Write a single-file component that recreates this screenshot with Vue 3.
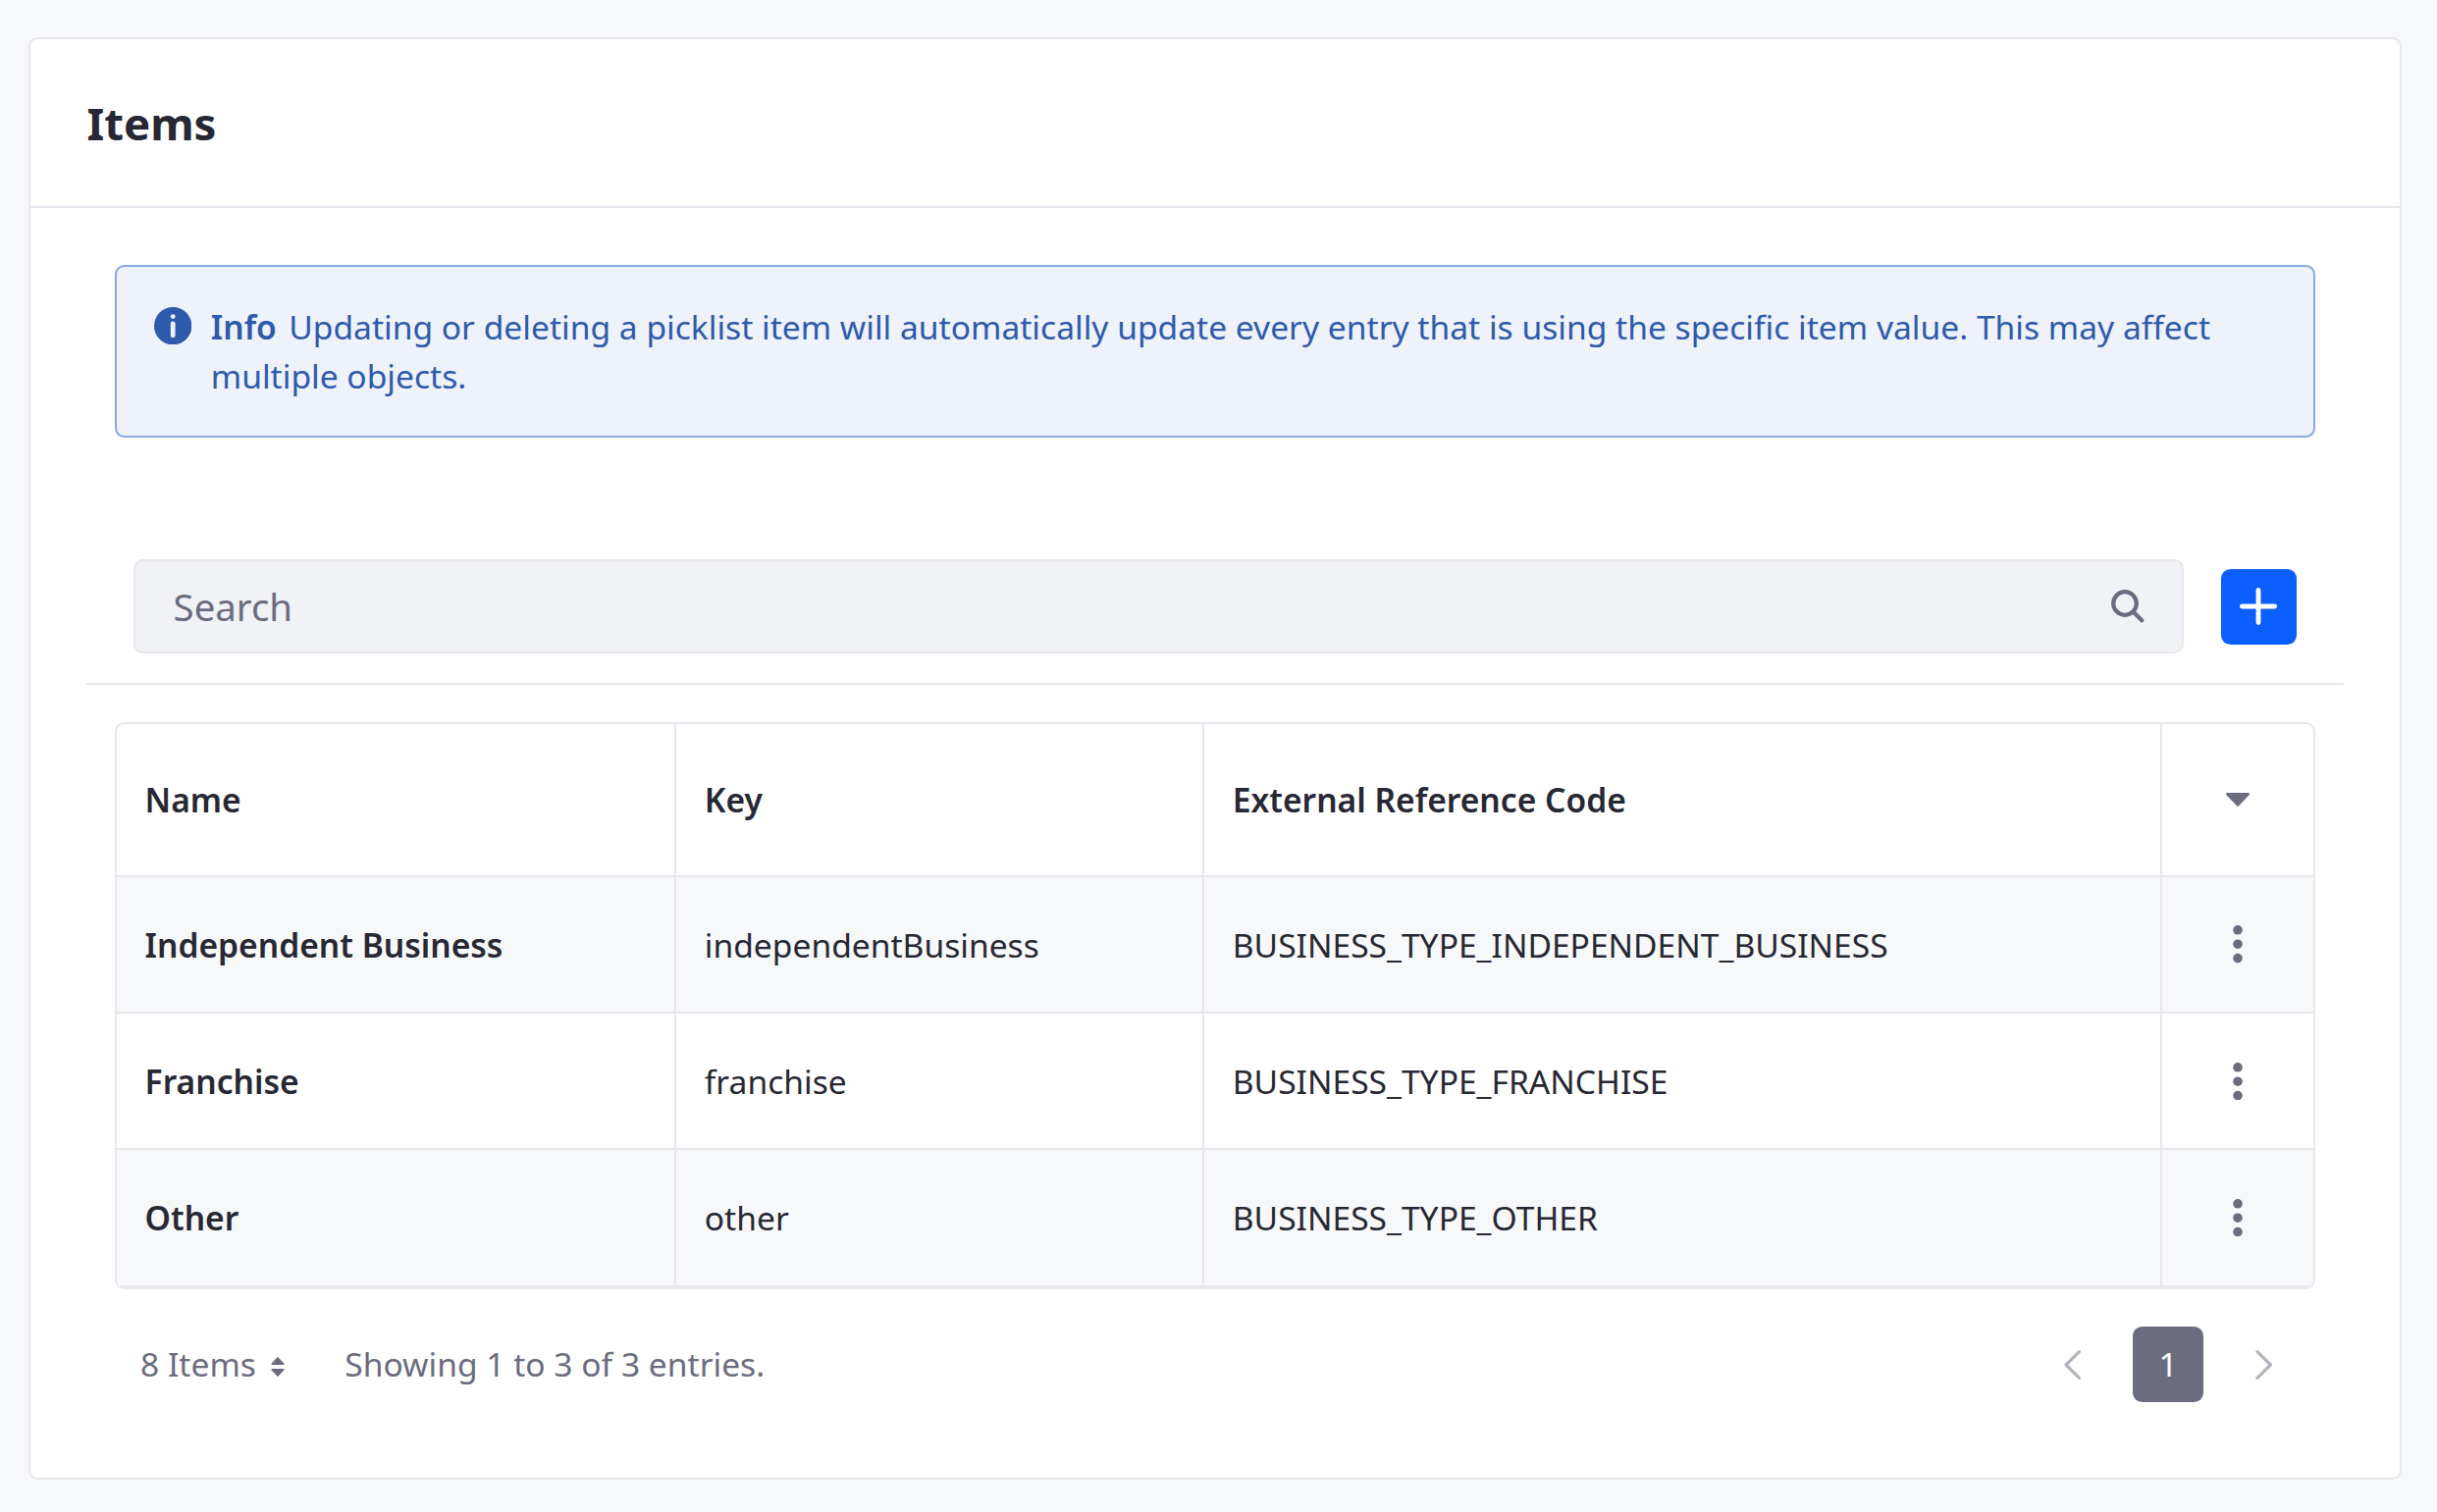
<script setup>
const rows = [
  { name: 'Independent Business', key: 'independentBusiness', code: 'BUSINESS_TYPE_INDEPENDENT_BUSINESS' },
  { name: 'Franchise', key: 'franchise', code: 'BUSINESS_TYPE_FRANCHISE' },
  { name: 'Other', key: 'other', code: 'BUSINESS_TYPE_OTHER' },
]
</script>

<template>
  <main class="page">
    <section class="card">
      <header class="card-header">
        <h1>Items</h1>
      </header>

      <div class="alert">
        <svg class="info-icon" viewBox="0 0 16 16">
          <circle cx="8" cy="8" r="8" fill="#2e5aac" />
          <circle cx="8" cy="4" r="1" fill="#eef2fa" />
          <rect x="7" y="6" width="2" height="7" rx="1" fill="#eef2fa" />
        </svg>
        <p><strong>Info</strong>Updating or deleting a picklist item will automatically update every entry that is using the specific item value. This may affect multiple objects.</p>
      </div>

      <div class="toolbar">
        <div class="search">
          <input type="text" placeholder="Search" aria-label="Search" />
          <svg class="search-icon" viewBox="0 0 34 34" fill="none" stroke="#6b6c7e">
            <circle cx="14" cy="14" r="11.8" stroke-width="4.2" />
            <path d="M23.5 23.5 31.2 31.2" stroke-width="4.2" stroke-linecap="round" />
          </svg>
        </div>
        <button class="add" aria-label="Add">
          <svg viewBox="0 0 38 38" stroke="#fff" stroke-width="4.8" stroke-linecap="round">
            <path d="M19 2.4v33.2M2.4 19h33.2" />
          </svg>
        </button>
      </div>

      <div class="table">
        <div class="row head">
          <div>Name</div>
          <div>Key</div>
          <div>External Reference Code</div>
          <div class="action">
            <svg class="caret" viewBox="0 0 24 14">
              <path d="M1.2 0H22.8C23.9 0 24.4 1.4 23.6 2.2L12.8 13.6C12.4 14.1 11.6 14.1 11.2 13.6L.4 2.2C-.4 1.4.1 0 1.2 0Z" fill="#6b6c7e" />
            </svg>
          </div>
        </div>
        <div v-for="row in rows" :key="row.key" class="row">
          <div class="name">{{ row.name }}</div>
          <div>{{ row.key }}</div>
          <div>{{ row.code }}</div>
          <div class="action">
            <svg class="dots" viewBox="0 0 10 38.4" fill="#6b6c7e">
              <circle cx="5" cy="4.8" r="4.8" />
              <circle cx="5" cy="19.2" r="4.8" />
              <circle cx="5" cy="33.6" r="4.8" />
            </svg>
          </div>
        </div>
      </div>

      <footer class="pagination">
        <span class="page-size">8 Items</span>
        <svg class="sort" viewBox="0 0 14 20" fill="#6b6c7e">
          <path d="M7.6.4 13.3 6.6C13.9 7.3 13.5 8 12.7 8H1.3C.5 8 .1 7.3.7 6.6L6.4.4C6.8 0 7.2 0 7.6.4Z" />
          <path d="M7.6 19.6 13.3 13.4C13.9 12.7 13.5 12 12.7 12H1.3C.5 12 .1 12.7.7 13.4L6.4 19.6C6.8 20 7.2 20 7.6 19.6Z" />
        </svg>
        <span class="showing">Showing 1 to 3 of 3 entries.</span>
        <nav class="pager">
          <svg class="chevron" viewBox="0 0 17 30"><path d="M15.5 1.6 2 15 15.5 28.4" /></svg>
          <span class="current">1</span>
          <svg class="chevron" viewBox="0 0 17 30"><path d="M1.9 1.6 15.4 15 1.9 28.4" /></svg>
        </nav>
      </footer>
    </section>
  </main>
</template>

<style>
body {
  margin: 0;
  background: #f7f8f9;
}
</style>

<style scoped>
* {
  box-sizing: border-box;
}
svg {
  display: block;
  flex: none;
}
.page {
  height: 1541px;
  padding: 38px 36px 33px 29px;
  background: #f7f8f9;
  font-family: "Noto Sans", sans-serif;
  font-size: 33.6px;
  line-height: 50.4px;
  color: #272833;
}
.card {
  height: 1470px;
  background: #fff;
  border: 2px solid #e7e7ed;
  border-radius: 9.6px;
}
.card-header {
  height: 172px;
  padding-left: 57.4px;
  border-bottom: 2px solid #e7e7ed;
  display: flex;
  align-items: center;
}
h1 {
  margin: 0;
  font-size: 45.6px;
  line-height: 56px;
  font-weight: 700;
}
.alert {
  height: 176px;
  margin: 58px 86px 0;
  padding: 36px 60px 0 38px;
  display: flex;
  gap: 19.4px;
  background: #eef2fa;
  border: 2px solid #89a7e0;
  border-radius: 9.6px;
  color: #2e5aac;
}
.alert p {
  margin: 0;
}
.alert strong {
  font-weight: 600;
  margin-right: 12.4px;
}
.info-icon {
  width: 38.4px;
  height: 38.4px;
  margin-top: 5px;
}
.toolbar {
  height: 252px;
  margin: 0 57px;
  padding: 0 48px 30px;
  display: flex;
  align-items: flex-end;
  gap: 38px;
  border-bottom: 2px solid #e7e7ed;
}
.search {
  flex: 1;
  height: 96px;
  padding: 0 38px 0 38.6px;
  display: flex;
  align-items: center;
  background: #f1f2f5;
  border: 2px solid #e7e7ed;
  border-radius: 9.6px;
}
.search input {
  flex: 1;
  padding: 0;
  border: 0;
  outline: 0;
  background: none;
  font: 38.4px/58px "Noto Sans", sans-serif;
}
.search input::placeholder {
  color: #6b6c7e;
  opacity: 1;
}
.search-icon {
  width: 34px;
  height: 34px;
}
.add {
  width: 77px;
  height: 77px;
  margin-bottom: 9px;
  padding: 0 1px 1px 0;
  display: grid;
  place-items: center;
  background: #0b5fff;
  border: 0;
  border-radius: 9.6px;
}
.add svg {
  width: 38px;
  height: 38px;
}
.table {
  margin: 38px 86px 0;
  border: 2px solid #e7e7ed;
  border-radius: 9.6px;
  overflow: hidden;
}
.row {
  height: 139px;
  display: grid;
  grid-template-columns: 570px 538px 976px 1fr;
  border-bottom: 2px solid #e7e7ed;
}
.row:nth-child(even) {
  background: #f7f8f9;
}
.row:last-child {
  height: 140px;
}
.row.head {
  height: 156px;
  font-weight: 600;
}
.row > div {
  display: flex;
  align-items: center;
  padding: 1px 0 0 28.8px;
  border-right: 2px solid #e7e7ed;
}
.row.head > div,
.row:last-child > div {
  padding-top: 0;
}
.row > .action {
  justify-content: center;
  padding: 0;
  border: 0;
}
.row:nth-child(3) > .action {
  padding-top: 1px;
}
.row > .name,
.row.head > div:first-child {
  padding-left: 28.6px;
}
.name {
  font-weight: 600;
}
.caret {
  width: 24px;
  height: 14px;
}
.dots {
  width: 10px;
  height: 38.4px;
}
.pagination {
  height: 77px;
  margin: 38px 130px 0 112px;
  display: flex;
  align-items: center;
  color: #6b6c7e;
}
.sort {
  width: 14px;
  height: 20px;
  margin: 4px 0 0 15px;
}
.showing {
  margin-left: 61.4px;
}
.pager {
  margin-left: auto;
  display: flex;
  align-items: center;
  gap: 53px;
}
.chevron {
  width: 17px;
  height: 30px;
  fill: none;
  stroke: #b5b5be;
  stroke-width: 3.2;
  stroke-linecap: round;
  stroke-linejoin: round;
}
.current {
  width: 72px;
  height: 77px;
  line-height: 77px;
  text-align: center;
  color: #fff;
  background: #6b6c7e;
  border-radius: 9.6px;
}
</style>
